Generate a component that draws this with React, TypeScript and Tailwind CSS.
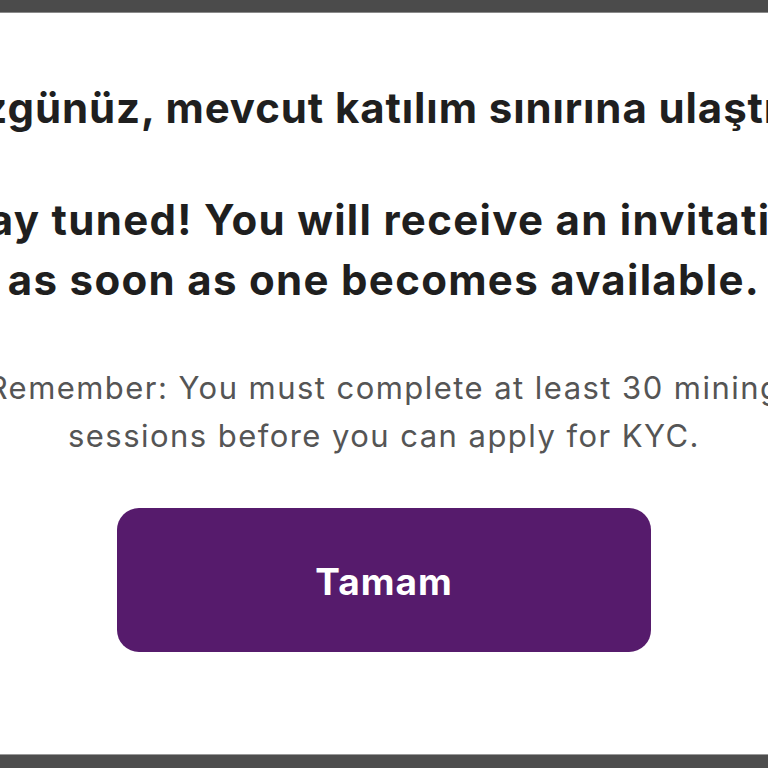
export default function App() {
    return (
        <main className="w-full h-[768px] flex flex-col bg-white overflow-hidden" style={{ fontFamily: "Inter, 'Open Sans', sans-serif" }}>
            {/* top bar */}
            <div className="h-[13px] w-full bg-[#4b4b4b] border-b border-[#8a8a8a] shrink-0" />

            <div className="flex-1 flex flex-col items-center">
                <h1 className="mt-[65px] whitespace-nowrap text-[42px] leading-[60px] tracking-[0.9px] font-bold text-[#1f1f1f]">
                    Üzgünüz, mevcut katılım sınırına ulaştık.
                </h1>

                <div className="mt-[52px] flex flex-col items-center text-[42px] leading-[60px] tracking-[1.3px] font-bold text-[#1f1f1f]">
                    <p className="whitespace-nowrap">Stay tuned! You will receive an invitation</p>
                    <p className="whitespace-nowrap">as soon as one becomes available.</p>
                </div>

                <div className="mt-[54px] flex flex-col items-center text-[31px] leading-[48px] tracking-[1.45px] text-[#555555]">
                    <p className="whitespace-nowrap">Remember: You must complete at least 30 mining</p>
                    <p className="whitespace-nowrap">sessions before you can apply for KYC.</p>
                </div>

                <button className="mt-[48px] w-[534px] h-[144px] shrink-0 rounded-[22px] bg-[#561b6c] text-white text-[37px] leading-[44px] pt-[3px] tracking-[1px] font-bold">
                    Tamam
                </button>
            </div>

            {/* bottom bar */}
            <div className="h-[14px] w-full bg-[#4d4d4d] border-t border-[#9a9a9a] shrink-0" />
        </main>
    );
}
